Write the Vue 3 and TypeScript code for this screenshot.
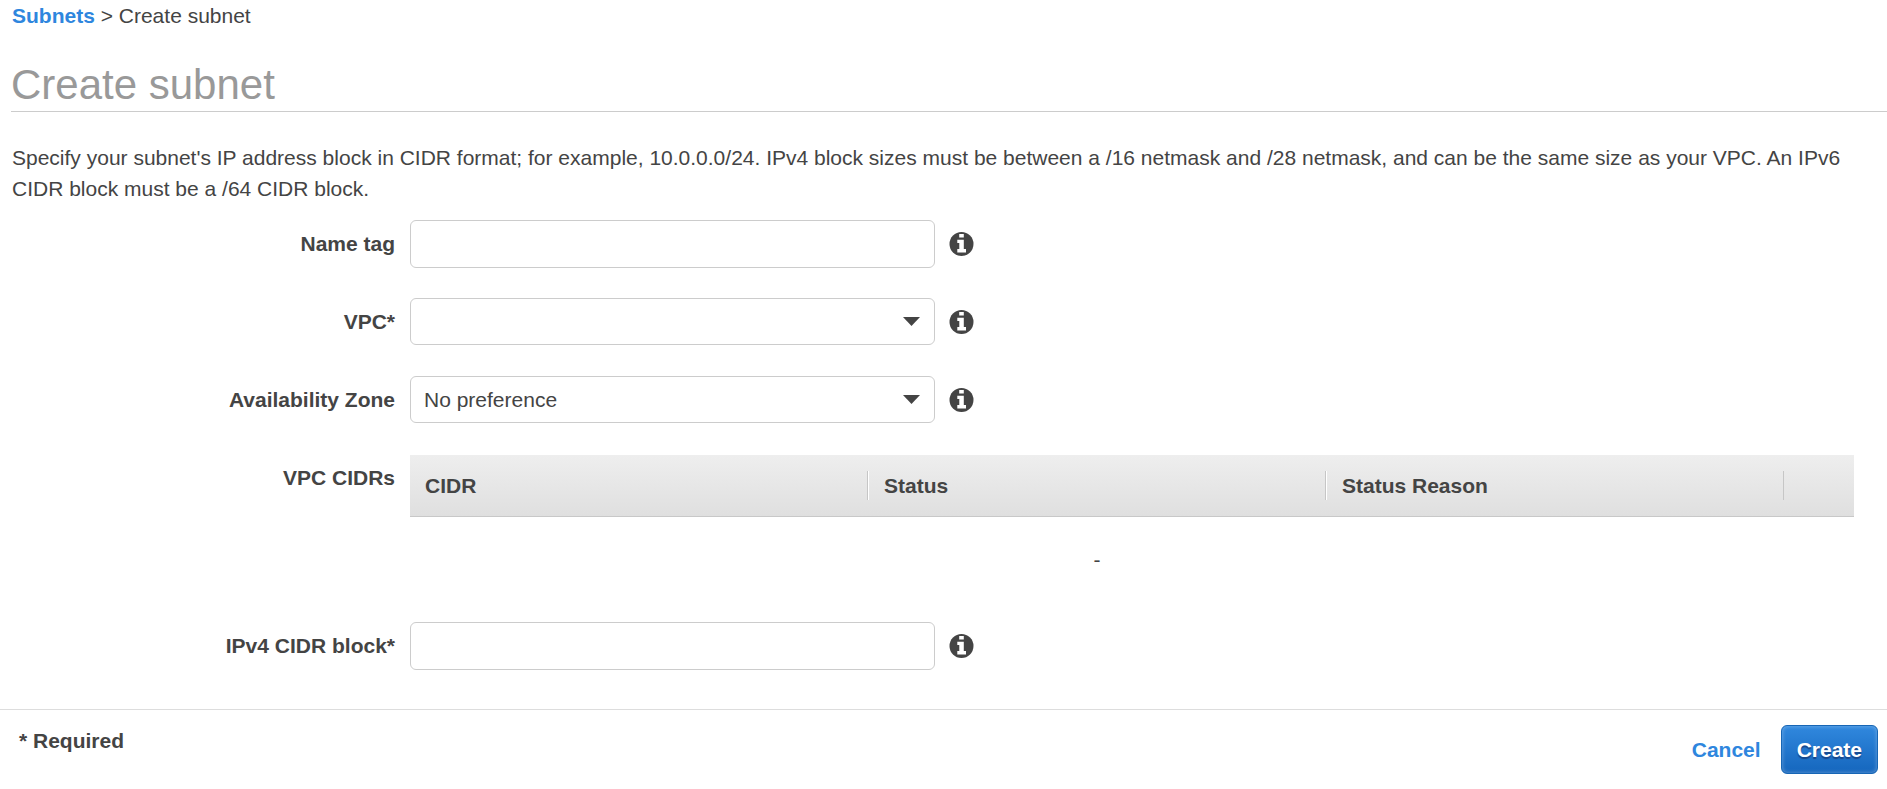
<script setup lang="ts">
import { ref } from 'vue'

interface Field {
  id: string
  label: string
  kind: 'text' | 'select'
  options?: string[]
}

const topFields: Field[] = [
  { id: 'name-tag', label: 'Name tag', kind: 'text' },
  { id: 'vpc', label: 'VPC*', kind: 'select', options: [''] },
  { id: 'zone', label: 'Availability Zone', kind: 'select', options: ['No preference'] },
]

const values = ref<Record<string, string>>({
  'name-tag': '',
  vpc: '',
  zone: 'No preference',
})
const cidrBlock = ref('')
const columns: string[] = ['CIDR', 'Status', 'Status Reason']
</script>

<template>
  <div class="page">
    <nav class="breadcrumb"><a href="#">Subnets</a> &gt; Create subnet</nav>
    <h1 class="title">Create subnet</h1>
    <p class="intro">
      Specify your subnet's IP address block in CIDR format; for example, 10.0.0.0/24. IPv4 block sizes must be
      between a /16 netmask and /28 netmask, and can be the same size as your VPC. An IPv6 CIDR block must be a /64
      CIDR block.
    </p>

    <form class="form" @submit.prevent>
      <div class="rows">
        <div v-for="field in topFields" :key="field.id" class="row">
          <label class="label" :for="field.id">{{ field.label }}</label>
          <div class="control">
            <input v-if="field.kind === 'text'" :id="field.id" v-model="values[field.id]" class="box" type="text" />
            <div v-else class="picker">
              <select :id="field.id" v-model="values[field.id]" class="box">
                <option v-for="option in field.options" :key="option" :value="option">{{ option }}</option>
              </select>
              <svg class="caret" viewBox="0 0 17 9" aria-hidden="true"><path d="M0 0h17L8.500 9z" /></svg>
            </div>
            <button class="info" type="button" :aria-label="`About ${field.label}`">
              <svg viewBox="0 0 24 24" aria-hidden="true">
                <circle cx="12" cy="12" r="12" />
                <path d="M9.700 2h4.600v3.600H9.700zM7.800 7.700h6.500v9.300h2.200v3.400H7.800V17h2v-6H7.800z" />
              </svg>
            </button>
          </div>
        </div>

        <div class="row">
          <span id="cidrs-label" class="label">VPC CIDRs</span>
          <table class="cidrs" aria-labelledby="cidrs-label">
            <thead>
              <tr>
                <th v-for="column in columns" :key="column" scope="col"><div class="cell">{{ column }}</div></th>
                <td class="spare"></td>
              </tr>
            </thead>
            <tbody>
              <tr>
                <td class="empty" colspan="3">-</td>
                <td></td>
              </tr>
            </tbody>
          </table>
        </div>

        <div class="row">
          <label class="label" for="ipv4">IPv4 CIDR block*</label>
          <div class="control">
            <input id="ipv4" v-model="cidrBlock" class="box" type="text" />
            <button class="info" type="button" aria-label="About IPv4 CIDR block">
              <svg viewBox="0 0 24 24" aria-hidden="true">
                <circle cx="12" cy="12" r="12" />
                <path d="M9.700 2h4.600v3.600H9.700zM7.800 7.700h6.500v9.300h2.200v3.400H7.800V17h2v-6H7.800z" />
              </svg>
            </button>
          </div>
        </div>
      </div>

      <footer class="footer">
        <span class="required">* Required</span>
        <div class="actions">
          <a class="cancel" href="#">Cancel</a>
          <button class="create" type="submit">Create</button>
        </div>
      </footer>
    </form>
  </div>
</template>

<style>
body {
  margin: 0;
  background: #fff;
}
</style>

<style scoped>
.page {
  color: #444;
  font-family: 'Liberation Sans', Arial, sans-serif;
  font-size: 21px;
  line-height: 31px;
}

.breadcrumb {
  padding-left: 12px;
}

.breadcrumb a,
.cancel {
  color: #2e86de;
  font-weight: bold;
  text-decoration: none;
}

.title {
  margin: 29px 0 0 11px;
  padding-bottom: 1px;
  border-bottom: 1px solid #ccc;
  color: #999;
  font-size: 42px;
  font-weight: normal;
  line-height: 50px;
}

.intro {
  margin: 30px 32px 16px 12px;
}

.rows {
  display: grid;
  gap: 30px;
  padding: 0 33px 39px 0;
}

.row {
  display: grid;
  grid-template-columns: 395px minmax(0, 1fr);
  column-gap: 15px;
}

.label {
  font-weight: bold;
  line-height: 48px;
  text-align: right;
}

.control {
  display: flex;
  align-items: center;
  gap: 14px;
}

.box {
  box-sizing: border-box;
  width: 525px;
  height: 48px;
  padding: 0 13px;
  border: 1px solid #ccc;
  border-radius: 6px;
  background: #fff;
  color: #444;
  font: inherit;
}

select.box {
  display: block;
  height: 47px;
  appearance: none;
}

.picker {
  position: relative;
  height: 48px;
}

.caret {
  position: absolute;
  top: 19px;
  right: 15px;
  width: 17px;
  height: 9px;
  fill: #444;
  pointer-events: none;
}

.info {
  width: 25px;
  height: 24px;
  padding: 0;
  border: 0;
  background: none;
}

.info svg {
  display: block;
  width: 25px;
  height: 24px;
  fill: #444;
}

.info path {
  fill: #fff;
}

.cidrs {
  width: 100%;
  margin-top: 1px;
  border-collapse: separate;
  border-spacing: 0;
  table-layout: fixed;
}

.cidrs thead {
  background: linear-gradient(#eee, #dfdfdf);
}

.cidrs th,
.cidrs .spare {
  height: 61px;
  padding: 0;
  border-bottom: 1px solid #c8c8c8;
  text-align: left;
}

.cell {
  padding-left: 15px;
  border-right: 1px solid #c6c6c6;
  line-height: 29px;
}

.cidrs th + th .cell {
  border-left: 1px solid #fff;
}

.cidrs .spare {
  width: 70px;
}

.empty {
  padding: 27px 0 17px;
  text-align: center;
}

.footer {
  display: flex;
  align-items: flex-start;
  justify-content: space-between;
  padding: 15px 9px 15px 19px;
  border-top: 1px solid #ddd;
}

.required {
  font-weight: bold;
}

.actions {
  display: flex;
  align-items: center;
  gap: 20px;
}

.create {
  height: 49px;
  padding: 0 15px;
  border: 1px solid #1766b5;
  border-radius: 6px;
  background: linear-gradient(#3088de, #1566bd);
  box-shadow: inset 0 0 4px rgba(255, 255, 255, 0.35);
  color: #fff;
  font: inherit;
  font-weight: bold;
  text-shadow: 0 2px 1px #17468a;
}
</style>
